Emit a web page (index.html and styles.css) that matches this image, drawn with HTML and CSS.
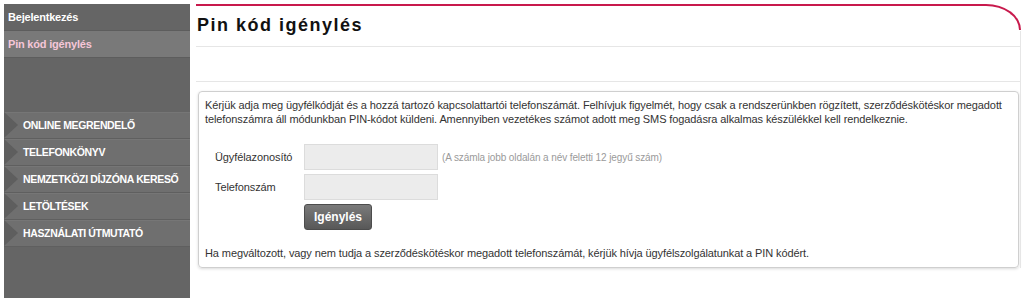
FILE: index.html
```html
<!DOCTYPE html>
<html lang="hu">
<head>
<meta charset="utf-8">
<title>Pin kód igénylés</title>
<link rel="stylesheet" href="styles.css">
</head>
<body>
<div class="page">
  <aside class="sidebar">
    <div class="side-top">
      <a class="side-link">Bejelentkezés</a>
      <a class="side-link active">Pin kód igénylés</a>
    </div>
    <nav class="menu">
      <a class="menu-item"><span>ONLINE MEGRENDELŐ</span></a>
      <a class="menu-item"><span>TELEFONKÖNYV</span></a>
      <a class="menu-item"><span>NEMZETKÖZI DÍJZÓNA KERESŐ</span></a>
      <a class="menu-item"><span>LETÖLTÉSEK</span></a>
      <a class="menu-item"><span>HASZNÁLATI ÚTMUTATÓ</span></a>
    </nav>
  </aside>
  <main class="main">
    <div class="title-bar"><h1 class="title">Pin kód igénylés</h1></div>
    <div class="spacer-bar"></div>
    <section class="box">
      <p class="intro">Kérjük adja meg ügyfélkódját és a hozzá tartozó kapcsolattartói telefonszámát. Felhívjuk figyelmét, hogy csak a rendszerünkben rögzített, szerződéskötéskor megadott telefonszámra áll módunkban PIN-kódot küldeni. Amennyiben vezetékes számot adott meg SMS fogadásra alkalmas készülékkel kell rendelkeznie.</p>
      <form class="form">
        <div class="row">
          <label class="label">Ügyfélazonosító</label>
          <input class="field" type="text">
          <span class="hint">(A számla jobb oldalán a név feletti 12 jegyű szám)</span>
        </div>
        <div class="row">
          <label class="label">Telefonszám</label>
          <input class="field" type="text">
        </div>
        <div class="row">
          <span class="label"></span>
          <button class="btn" type="button">Igénylés</button>
        </div>
      </form>
      <p class="outro">Ha megváltozott, vagy nem tudja a szerződéskötéskor megadott telefonszámát, kérjük hívja ügyfélszolgálatunkat a PIN kódért.</p>
    </section>
  </main>
</div>
</body>
</html>
```
FILE: styles.css
```css
html, body {
  margin: 0;
  padding: 0;
  background: #fff;
}
body {
  font-family: "Liberation Sans", Arial, sans-serif;
  font-size: 11px;
  color: #333;
}
.page {
  display: flex;
  align-items: flex-start;
  gap: 6px;
  padding: 4px 0 0 4px;
}
.sidebar {
  width: 186px;
  height: 294px;
  background: #656565;
  display: flex;
  flex-direction: column;
}
.side-top {
  display: flex;
  flex-direction: column;
}
.side-link {
  display: flex;
  align-items: center;
  height: 26px;
  padding-left: 4px;
  font-weight: bold;
  font-size: 11px;
  letter-spacing: -0.2px;
  color: #fff;
  border-bottom: 1px solid #5d5d5d;
}
.side-link.active {
  background: #797979;
  color: #f5c6d8;
}
.menu {
  display: flex;
  flex-direction: column;
  margin-top: 54px;
}
.menu-item {
  display: flex;
  align-items: center;
  height: 26px;
  background: #6f6f6f;
  border-bottom: 1px solid #5f5f5f;
  box-shadow: inset 0 1px 0 #767676;
  color: #fff;
  font-weight: bold;
  font-size: 10.5px;
  letter-spacing: -0.35px;
  white-space: nowrap;
}
.menu-item::before {
  content: "";
  width: 0;
  height: 0;
  border-left: 14px solid #5e5e5e;
  border-top: 13px solid transparent;
  border-bottom: 13px solid transparent;
  margin-right: 5px;
}
.main {
  position: relative;
  width: 825px;
  display: flex;
  flex-direction: column;
}
.main::before {
  content: "";
  position: absolute;
  top: 0;
  left: 0;
  right: 0;
  height: 26px;
  border-top: 2px solid #c8194c;
  border-right: 2px solid #c8194c;
  border-top-right-radius: 35px 26px;
  box-sizing: border-box;
  pointer-events: none;
}
.main::after {
  content: "";
  position: absolute;
  top: 27px;
  right: 0;
  bottom: 0;
  width: 1px;
  background: #e6e6e6;
}
.title-bar {
  height: 42px;
  border-bottom: 1px solid #e6e6e6;
  display: flex;
  align-items: flex-end;
  margin-right: 1px;
}
.title {
  margin: 0 0 11px 1px;
  font-size: 18px;
  line-height: 20px;
  font-weight: bold;
  letter-spacing: 1.5px;
  color: #111;
}
.spacer-bar {
  height: 34px;
  border-bottom: 1px solid #e6e6e6;
  margin-right: 1px;
}
.box {
  margin: 9px 2px 0 2px;
  height: 177px;
  box-sizing: border-box;
  border: 1px solid #cfcfcf;
  border-radius: 4px;
  box-shadow: 0 1px 3px rgba(0,0,0,0.15);
  padding: 6px 6px 0 6px;
  display: flex;
  flex-direction: column;
  letter-spacing: -0.1px;
}
.intro, .outro {
  margin: 0;
  line-height: 14px;
}
.form {
  display: flex;
  flex-direction: column;
  gap: 4px;
  margin: 18px 0 16px 10px;
}
.row {
  display: flex;
  align-items: center;
  height: 26px;
}
.label {
  width: 89px;
  flex: none;
  font-size: 11px;
}
.field {
  width: 134px;
  height: 26px;
  box-sizing: border-box;
  background: #ececec;
  border: 1px solid #dcdcdc;
  margin: 0;
  padding: 0;
}
.hint {
  margin-left: 4px;
  color: #9a9a9a;
  font-size: 10px;
}
.btn {
  width: 68px;
  height: 26px;
  margin: 0;
  padding: 0;
  border: 1px solid #4c4c4c;
  border-radius: 3px;
  background: linear-gradient(#7a7a7a, #585858);
  color: #fff;
  font-family: "Liberation Sans", Arial, sans-serif;
  font-weight: bold;
  font-size: 12px;
  letter-spacing: 0;
}
```
